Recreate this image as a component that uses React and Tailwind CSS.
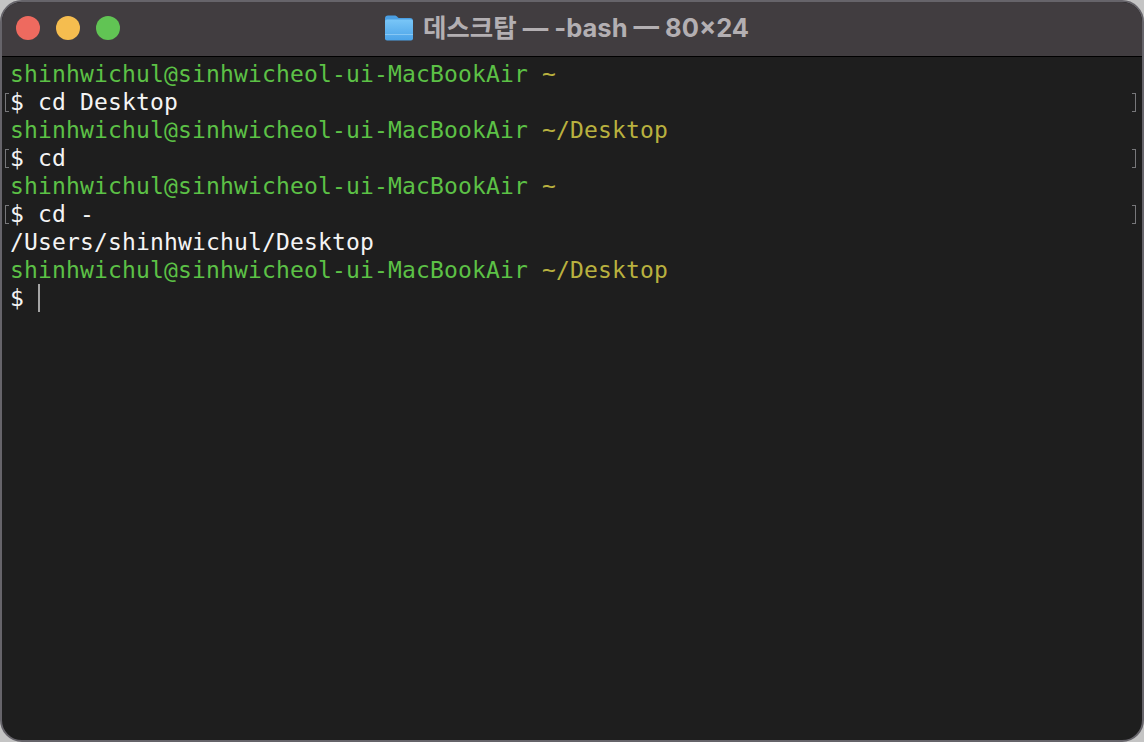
const GREEN = 'text-[#5cc146]';
const YELLOW = 'text-[#b9b13f]';

function Prompt({ path }) {
  return (
    <div className="h-7 whitespace-pre">
      <span className={GREEN}>shinhwichul@sinhwicheol-ui-MacBookAir</span>{' '}
      <span className={YELLOW}>{path}</span>
    </div>
  );
}

// a command line with the grey mark brackets at both edges
function Command({ text }) {
  return (
    <div className="relative h-7 whitespace-pre text-[#f4f4f4]">
      <span className="absolute left-[-5px] top-[5px] h-[19px] w-[4px] border-y border-l border-[#77777a]" />
      $ {text}
      <span className="absolute right-[5px] top-[5px] h-[19px] w-[4px] border-y border-r border-[#77777a]" />
    </div>
  );
}

function FolderIcon() {
  return (
    <svg width="28" height="26" viewBox="0 0 28 26" className="shrink-0">
      <defs>
        <linearGradient id="folder" x1="0" y1="0" x2="0" y2="1">
          <stop offset="0" stopColor="#79c6f7" />
          <stop offset="1" stopColor="#4ba3e8" />
        </linearGradient>
      </defs>
      <path d="M0 3.5C0 1.5 1 0.5 3 0.5h6.5c1.5 0 2 .5 3 1.5.6.6 1 1 2 1H25c2 0 3 1 3 3V8H0z" fill="#4a9fe3" />
      <path d="M0 6.5C0 5.4.8 4.6 2 4.6h24c1.2 0 2 .8 2 1.9V23.500c0 1.300-.9 2-2 2H2c-1.100 0-2-.7-2-2z" fill="url(#folder)" />
      <path d="M0 19.500h28" stroke="#9ad3f8" strokeWidth="1" opacity="0.7" />
    </svg>
  );
}

function TitleBar() {
  return (
    <div className="relative flex h-[55px] shrink-0 items-center justify-center border-b border-black bg-[#413d40]">
      <div className="absolute left-[14px] top-[14px] flex gap-4">
        <span className="size-6 rounded-full bg-[#ee6a5f]" />
        <span className="size-6 rounded-full bg-[#f5bd4f]" />
        <span className="size-6 rounded-full bg-[#61c454]" />
      </div>
      <div className="flex -translate-y-[1px] items-center gap-[10px] pr-[10px] font-['Inter','Noto_Sans_CJK_KR',sans-serif] text-[25.5px] font-bold text-[#b3afb2]">
        <FolderIcon />
        <span>데스크탑 — -bash — 80×24</span>
      </div>
    </div>
  );
}

export default function App() {
  return (
    <div className="h-[742px] w-[1144px] overflow-hidden bg-[#c4c4c4]">
      <div className="flex h-full flex-col overflow-hidden rounded-[22px] border-2 border-[#66646a] bg-[#1e1e1e]">
        <TitleBar />
        <main className="flex-1 pl-[8px] pr-[1px] pt-[3px] font-['DejaVu_Sans_Mono',monospace] text-[23px] leading-7 tracking-[0.15px]">
          <Prompt path="~" />
          <Command text="cd Desktop" />
          <Prompt path="~/Desktop" />
          <Command text="cd" />
          <Prompt path="~" />
          <Command text="cd -" />
          <div className="h-7 text-[#f4f4f4]">/Users/shinhwichul/Desktop</div>
          <Prompt path="~/Desktop" />
          <div className="flex h-7 items-center whitespace-pre text-[#f4f4f4]">
            $ <span className="h-7 w-[2px] bg-[#a5a5a5]" />
          </div>
        </main>
      </div>
    </div>
  );
}
